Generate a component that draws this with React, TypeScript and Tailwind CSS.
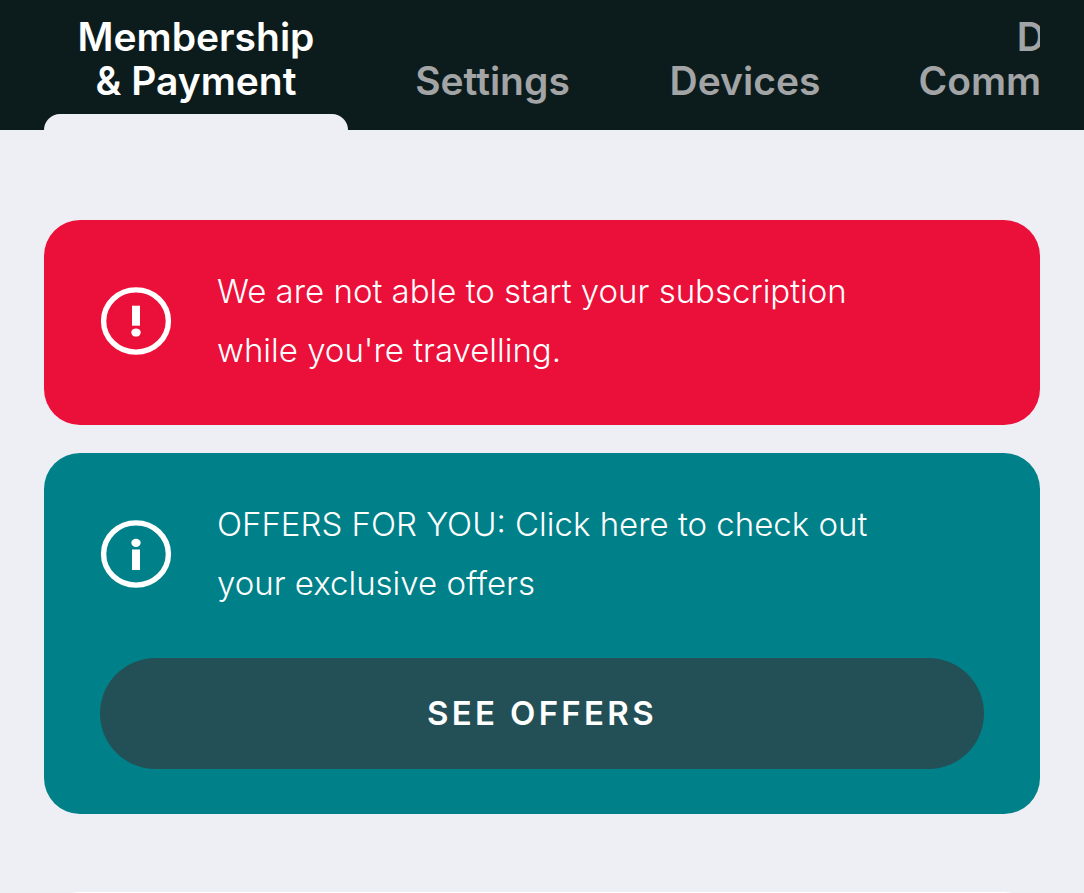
import { useState } from 'react'

type TabId = 'membership' | 'settings' | 'devices' | 'communications'

type Tab = {
  id: TabId
  lines: string[]
  width: string
}

const TABS: Tab[] = [
  { id: 'membership', lines: ['Membership', '& Payment'], width: 'w-[304px]' },
  { id: 'settings', lines: ['Settings'], width: 'w-[225px]' },
  { id: 'devices', lines: ['Devices'], width: 'w-[216px]' },
  { id: 'communications', lines: ['Data &', 'Communications'], width: 'w-[386px]' },
]

function TabButton({ tab, active, onClick }: { tab: Tab; active: boolean; onClick: () => void }) {
  return (
    <button
      type="button"
      role="tab"
      aria-selected={active}
      onClick={onClick}
      className={`${tab.width} flex shrink-0 flex-col justify-end text-center text-[39px] leading-[44px] font-semibold ${active ? 'text-white' : 'text-[#a3a4a6]'}`}
    >
      {tab.lines.map(line => (
        <span key={line} className="block whitespace-nowrap">{line}</span>
      ))}
      <span className={`mt-[11px] block h-4 w-full rounded-t-2xl ${active ? 'bg-[#eeeff4]' : ''}`} />
    </button>
  )
}

function AlertIcon({ kind }: { kind: 'warning' | 'info' }) {
  return (
    <svg viewBox="0 0 72 68" className="h-[68px] w-[72px] shrink-0" fill="none" aria-hidden="true">
      <ellipse cx="36" cy="34" rx="32.4" ry="31.1" stroke="white" strokeWidth="5.4" />
      {kind === 'warning' ? (
        <g fill="white">
          <rect x="32" y="18.7" width="8" height="20" />
          <ellipse cx="36" cy="45.5" rx="4.7" ry="4.1" />
        </g>
      ) : (
        <g fill="white">
          <ellipse cx="36" cy="22.8" rx="4.7" ry="4.1" />
          <rect x="32" y="29.5" width="8" height="20.5" />
        </g>
      )}
    </svg>
  )
}

function Alert({ kind, color, children, action }: { kind: 'warning' | 'info'; color: string; children: React.ReactNode; action?: React.ReactNode }) {
  return (
    <section className={`${color} shrink-0 rounded-[36px] px-14 pt-[42px] pb-[45px] text-white`}>
      <div className="flex items-center gap-[45px]">
        <AlertIcon kind={kind} />
        <p className="text-[33px] leading-[59px] font-light">{children}</p>
      </div>
      {action}
    </section>
  )
}

export default function App() {
  const [activeTab, setActiveTab] = useState<TabId>('membership')

  return (
    <div className="flex h-screen flex-col overflow-hidden bg-[#eeeff4] font-['Inter',sans-serif]">
      <header className="shrink-0 bg-[#0c1c1c] px-11">
        <div role="tablist" className="flex gap-8 overflow-hidden pt-[15px]">
          {TABS.map(tab => (
            <TabButton key={tab.id} tab={tab} active={tab.id === activeTab} onClick={() => setActiveTab(tab.id)} />
          ))}
        </div>
      </header>

      <main className="flex flex-col px-11 pt-[90px]">
        <Alert kind="warning" color="bg-[#eb103a]">
          We are not able to start your subscription
          <br />
          while you're travelling.
        </Alert>

        <div className="mt-7 flex flex-col">
          <Alert
            kind="info"
            color="bg-[#008189]"
            action={
              <button type="button" className="mt-[45px] h-[111px] w-full rounded-full bg-[#225056] text-[33px] font-semibold tracking-widest">
                SEE OFFERS
              </button>
            }
          >
            OFFERS FOR YOU: Click here to check out
            <br />
            your exclusive offers
          </Alert>
        </div>

        <div className="mt-[78px] h-40 shrink-0 rounded-[36px] bg-white" />
      </main>
    </div>
  )
}
